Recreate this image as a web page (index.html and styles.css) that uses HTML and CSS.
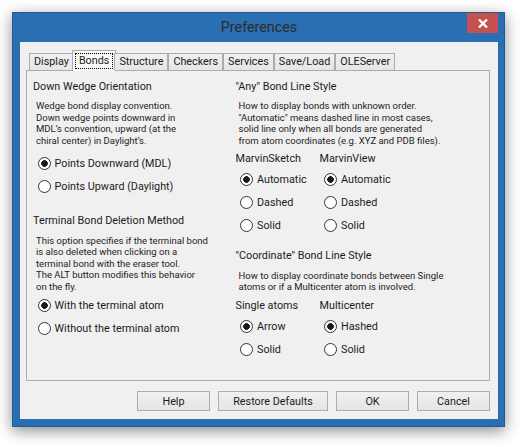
FILE: index.html
```html
<!DOCTYPE html>
<html lang="en">
<head>
    <meta charset="UTF-8">
    <meta name="viewport" content="width=device-width, initial-scale=1.0">
    <title>Preferences</title>
    <link rel="stylesheet" href="styles.css">
</head>
<body>
    <!-- Dialog window -->
    <div class="window">
        <div class="titlebar">
            <span></span>
            <span class="title">Preferences</span>
            <button class="close" title="Close">
                <svg width="10" height="9" viewBox="0 0 10 9">
                    <path d="M1 0.5 L9 8.5 M9 0.5 L1 8.5" stroke="#fff" stroke-width="2.2" fill="none"/>
                </svg>
            </button>
        </div>

        <div class="client">
            <!-- Tabs -->
            <div class="tabs">
                <div class="tab">Display</div>
                <div class="tab selected"><span class="focus">Bonds</span></div>
                <div class="tab">Structure</div>
                <div class="tab">Checkers</div>
                <div class="tab">Services</div>
                <div class="tab">Save/Load</div>
                <div class="tab">OLEServer</div>
            </div>

            <!-- Bonds page -->
            <div class="page">
                <div class="col left">
                    <div class="heading">Down Wedge Orientation</div>
                    <p class="desc">Wedge bond display convention.<br>Down wedge points downward in<br>MDL’s convention, upward (at the<br>chiral center) in Daylight’s.</p>
                    <div class="radios first">
                        <label class="radio"><input type="radio" name="wedge" checked>Points Downward (MDL)</label>
                        <label class="radio"><input type="radio" name="wedge">Points Upward (Daylight)</label>
                    </div>

                    <div class="heading second">Terminal Bond Deletion Method</div>
                    <p class="desc desc-second">This option specifies if the terminal bond<br>is also deleted when clicking on a<br>terminal bond with the eraser tool.<br>The ALT button modifies this behavior<br>on the fly.</p>
                    <div class="radios last">
                        <label class="radio"><input type="radio" name="terminal" checked>With the terminal atom</label>
                        <label class="radio"><input type="radio" name="terminal">Without the terminal atom</label>
                    </div>
                </div>

                <div class="col right">
                    <div class="heading">"Any" Bond Line Style</div>
                    <p class="desc">How to display bonds with unknown order.<br>"Automatic" means dashed line in most cases,<br>solid line only when all bonds are generated<br>from atom coordinates (e.g. XYZ and PDB files).</p>
                    <div class="options">
                        <div class="option-col">
                            <div class="sublabel">MarvinSketch</div>
                            <div class="radios">
                                <label class="radio"><input type="radio" name="anySketch" checked>Automatic</label>
                                <label class="radio"><input type="radio" name="anySketch">Dashed</label>
                                <label class="radio"><input type="radio" name="anySketch">Solid</label>
                            </div>
                        </div>
                        <div class="option-col">
                            <div class="sublabel">MarvinView</div>
                            <div class="radios">
                                <label class="radio"><input type="radio" name="anyView" checked>Automatic</label>
                                <label class="radio"><input type="radio" name="anyView">Dashed</label>
                                <label class="radio"><input type="radio" name="anyView">Solid</label>
                            </div>
                        </div>
                    </div>

                    <div class="heading coord">"Coordinate" Bond Line Style</div>
                    <p class="desc desc-coord">How to display coordinate bonds between Single<br>atoms or if a Multicenter atom is involved.</p>
                    <div class="options">
                        <div class="option-col">
                            <div class="sublabel">Single atoms</div>
                            <div class="radios">
                                <label class="radio"><input type="radio" name="single" checked>Arrow</label>
                                <label class="radio"><input type="radio" name="single">Solid</label>
                            </div>
                        </div>
                        <div class="option-col">
                            <div class="sublabel">Multicenter</div>
                            <div class="radios">
                                <label class="radio"><input type="radio" name="multi" checked>Hashed</label>
                                <label class="radio"><input type="radio" name="multi">Solid</label>
                            </div>
                        </div>
                    </div>
                </div>
            </div>

            <!-- Dialog buttons -->
            <div class="buttons">
                <button class="btn">Help</button>
                <button class="btn wide">Restore Defaults</button>
                <button class="btn">OK</button>
                <button class="btn">Cancel</button>
            </div>
        </div>
    </div>
</body>
</html>
```

FILE: styles.css
```css
* {
    box-sizing: border-box;
}

body {
    margin: 0;
    width: 526px;
    height: 447px;
    background-color: #ffffff;
    font-family: "Segoe UI", Roboto, "Noto Sans", sans-serif;
    font-size: 10.8px;
    color: #1b1b1b;
    overflow: hidden;
}

.window {
    margin: 12px 0 0 12px;
    width: 493px;
    height: 415px;
    background-color: #2a6fb2;
    border: 1px solid #1e5c98;
    padding: 0 6px 7px 7px;
    box-shadow: 0 4px 14px rgba(0, 0, 0, 0.45);
}

.titlebar {
    height: 29px;
    display: grid;
    grid-template-columns: 31px 1fr 31px;
}

.title {
    text-align: center;
    font-size: 14.3px;
    line-height: 29px;
    color: #2b2b2b;
}

.close {
    width: 31px;
    height: 20px;
    margin-right: -1px;
    border: none;
    padding: 0;
    background-color: #c75050;
    display: flex;
    align-items: center;
    justify-content: center;
}

.client {
    height: 377px;
    background-color: #f0f0f0;
    padding: 8px 8px 0 6px;
}

.tabs {
    display: flex;
    align-items: flex-end;
    height: 20px;
    padding-left: 3px;
    position: relative;
    z-index: 1;
}

.tab {
    height: 17px;
    line-height: 16px;
    padding: 0 4px;
    border: 1px solid #acacac;
    border-bottom: none;
    background: linear-gradient(#f0f0f0, #e5e5e5);
}

.tab.selected {
    height: 21px;
    margin: 0 -2px -1px;
    padding: 2px 2px 0;
    background: #fafafa;
    line-height: 16px;
}

.focus {
    display: block;
    height: 16px;
    padding: 0 3px;
    border: 1px dotted #000;
    line-height: 14px;
}

.page {
    height: 311px;
    border: 1px solid #acacac;
    padding: 8px 0 0 6px;
    display: flex;
}

.col.left {
    width: 202.5px;
}

.col.right {
    flex: 1;
}

.heading {
    line-height: 16px;
    white-space: nowrap;
}

.heading.second {
    margin-top: 15.2px;
}

.heading.coord {
    margin-top: 10.6px;
}

.desc {
    margin: 5px 0 0 3px;
    font-size: 9.5px;
    line-height: 11.6px;
    color: #262220;
    white-space: nowrap;
}

.desc.desc-second,
.desc.desc-coord {
    margin-top: 6px;
    line-height: 11.5px;
}

.radios {
    margin-left: 4.5px;
}

.radios.first {
    margin-top: 5.4px;
}

.radios.last {
    margin-top: 2px;
}

.radio {
    display: flex;
    align-items: center;
    gap: 4px;
    height: 23px;
    white-space: nowrap;
}

.radio input {
    appearance: none;
    -webkit-appearance: none;
    width: 13px;
    height: 13px;
    margin: 0;
    border: 1px solid #333333;
    border-radius: 50%;
    background-color: #ffffff;
}

.radio input:checked {
    background: radial-gradient(circle, #1a1a1a 0, #1a1a1a 3px, #ffffff 3.6px);
}

.options {
    display: grid;
    grid-template-columns: 84px 84px;
    margin-top: 5px;
}

.sublabel {
    line-height: 16px;
    margin-bottom: 1px;
    white-space: nowrap;
}

.btn {
    width: 73px;
    height: 20px;
    padding: 0;
    border: 1px solid #adadad;
    background: linear-gradient(#f0f0f0, #e5e5e5);
    font-family: inherit;
    font-size: 10.8px;
    color: #1b1b1b;
}

.btn.wide {
    width: 110px;
}

.buttons {
    display: flex;
    justify-content: flex-end;
    gap: 8px;
    margin-top: 10px;
}
```
